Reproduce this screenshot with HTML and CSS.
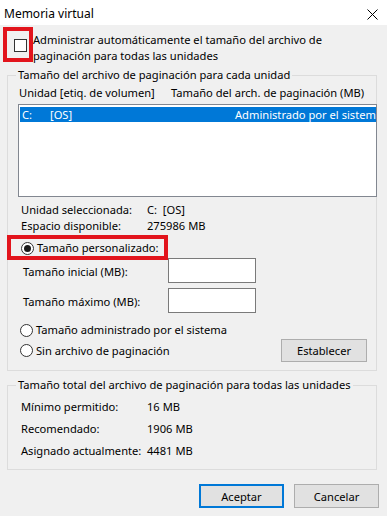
FILE: index.html
```html
<!DOCTYPE html>
<html lang="es">
  <head>
    <meta charset="UTF-8" />
    <meta name="viewport" content="width=device-width, initial-scale=1.0" />
    <title>Memoria virtual</title>
    <link rel="stylesheet" href="styles.css">
  </head>
  <body>
    <div class="titlebar">
      <span class="title">Memoria virtual</span>
      <svg class="close" width="11" height="11" viewBox="0 0 11 11">
        <path d="M0.5 0.5 L10.5 10.5 M10.5 0.5 L0.5 10.5" stroke="#000" stroke-width="1" fill="none" />
      </svg>
    </div>

    <div class="auto-row">
      <span class="mark mark-check"><span class="checkbox"></span></span>
      <span class="auto-text">Administrar automáticamente el tamaño del archivo de<br>paginación para todas las unidades</span>
    </div>

    <fieldset class="group group-drives">
      <legend>Tamaño del archivo de paginación para cada unidad</legend>
      <div class="col-heads">
        <span class="col-drive">Unidad [etiq. de volumen]</span>
        <span>Tamaño del arch. de paginación (MB)</span>
      </div>
      <div class="listbox">
        <div class="list-row selected">
          <span class="cell-letter">C:</span>
          <span class="cell-label">[OS]</span>
          <span class="cell-size">Administrado por el sistema</span>
        </div>
      </div>

      <div class="info">
        <div class="info-row"><span class="info-key">Unidad seleccionada:</span><span>C:&nbsp;&nbsp;[OS]</span></div>
        <div class="info-row"><span class="info-key">Espacio disponible:</span><span>275986 MB</span></div>
      </div>

      <div class="mark mark-radio">
        <span class="radio checked"></span>
        <span>Tamaño personalizado:</span>
      </div>

      <div class="size-row first">
        <span class="size-label">Tamaño inicial (MB):</span>
        <span class="textbox"></span>
      </div>
      <div class="size-row">
        <span class="size-label">Tamaño máximo (MB):</span>
        <span class="textbox"></span>
      </div>

      <div class="option first">
        <span class="radio"></span>
        <span>Tamaño administrado por el sistema</span>
      </div>
      <div class="option last">
        <span class="radio"></span>
        <span>Sin archivo de paginación</span>
        <button type="button" class="btn btn-set">Establecer</button>
      </div>
    </fieldset>

    <fieldset class="group group-total">
      <legend>Tamaño total del archivo de paginación para todas las unidades</legend>
      <div class="total-row"><span class="info-key">Mínimo permitido:</span><span>16 MB</span></div>
      <div class="total-row"><span class="info-key">Recomendado:</span><span>1906 MB</span></div>
      <div class="total-row"><span class="info-key">Asignado actualmente:</span><span>4481 MB</span></div>
    </fieldset>

    <div class="actions">
      <button type="button" class="btn btn-default">Aceptar</button>
      <button type="button" class="btn">Cancelar</button>
    </div>
  </body>
</html>
```

FILE: styles.css
```css
body {
  margin: 0;
  padding: 0;
  font-family: "Noto Sans", "Open Sans", sans-serif;
  font-size: 11.15px;
  line-height: 16px;
  color: #000;
  background-color: #f0f0f0;
  width: 387px;
  height: 516px;
  overflow: hidden;
}

.titlebar {
  height: 25px;
  background-color: #fff;
  display: flex;
  justify-content: space-between;
  align-items: center;
  padding: 0 9px 0 4px;
}

.title {
  font-size: 12px;
  padding-top: 2px;
}

.close {
  margin-top: 3px;
}

/* red annotation frames */
.mark {
  border: 4px solid #e2141c;
  box-sizing: border-box;
}

.auto-row {
  display: flex;
  align-items: flex-start;
  padding-left: 3px;
}

.mark-check {
  margin-top: 2px;
  width: 30px;
  height: 35px;
  padding: 8px 0 0 7px;
}

.checkbox {
  display: block;
  width: 13px;
  height: 13px;
  box-sizing: border-box;
  border: 1px solid #333;
  background-color: #fff;
}

.auto-text {
  padding-top: 7px;
}

.group {
  margin: 0 10px 0 7px;
  padding: 0;
  border: 1px solid #dcdcdc;
  min-width: 0;
}

.group legend {
  margin-left: 8px;
  padding: 0 2px;
  line-height: 16px;
}

.group-drives {
  margin-top: 3px;
  padding-bottom: 8px;
}

.col-heads {
  display: flex;
  margin: 2px 0 0 11px;
}

.col-drive {
  width: 152px;
}

.listbox {
  margin: 3px -1px 0 10px;
  height: 93px;
  box-sizing: border-box;
  border: 1px solid #828790;
  background-color: #fff;
  padding: 2px 0 0 1px;
}

.list-row {
  display: flex;
  height: 15px;
  line-height: 15px;
  white-space: nowrap;
  overflow: hidden;
}

.list-row.selected {
  background-color: #0078d7;
  color: #fff;
}

.list-row span {
  flex: none;
}

.cell-letter {
  width: 28px;
  padding-left: 2px;
}

.cell-label {
  width: 184px;
}

.cell-size {
  padding-left: 1px;
}

.info {
  margin: 5px 0 0 13px;
}

.info-row,
.total-row {
  display: flex;
}

.info-key {
  width: 126px;
}

.mark-radio {
  display: flex;
  align-items: center;
  margin: 1px 0 0 -1px;
  width: 161px;
  height: 25px;
  padding: 1px 0 0 10px;
}

.radio {
  width: 13px;
  height: 13px;
  box-sizing: border-box;
  border: 1px solid #333;
  border-radius: 50%;
  background-color: #fff;
  margin-right: 3px;
  display: flex;
  align-items: center;
  justify-content: center;
  flex: none;
}

.radio.checked::after {
  content: "";
  width: 7px;
  height: 7px;
  border-radius: 50%;
  background-color: #1a1a1a;
}

.size-row {
  display: flex;
  align-items: center;
  margin: 5px 0 0 15px;
}

.size-row.first {
  margin-top: -2px;
}

.size-label {
  flex: 0 0 145px;
  padding-top: 2px;
}

.textbox {
  width: 88px;
  height: 25px;
  box-sizing: border-box;
  border: 1px solid #7a7a7a;
  background-color: #fff;
}

.option {
  display: flex;
  align-items: center;
  margin-left: 12px;
}

.option.first {
  margin-top: 9px;
}

.option.last {
  margin-top: 1px;
  height: 23px;
}

.btn {
  font-family: inherit;
  font-size: 11.15px;
  color: #000;
  background-color: #e1e1e1;
  border: 1px solid #adadad;
  padding: 0;
  cursor: pointer;
}

.btn:hover {
  background-color: #e5f1fb;
  border-color: #0078d7;
}

.btn-set {
  margin-left: auto;
  margin-right: 9px;
  width: 86px;
  height: 23px;
}

.group-total {
  margin-top: 6px;
  padding-bottom: 7px;
}

.total-row {
  margin-left: 13px;
  line-height: 22px;
}

.total-row:first-of-type {
  margin-top: 3px;
}

.actions {
  display: flex;
  justify-content: flex-end;
  gap: 10px;
  margin-top: 14px;
  padding-right: 8px;
}

.actions .btn {
  width: 85px;
  height: 24px;
}

.actions .btn-default {
  border: 2px solid #0078d7;
}
```
